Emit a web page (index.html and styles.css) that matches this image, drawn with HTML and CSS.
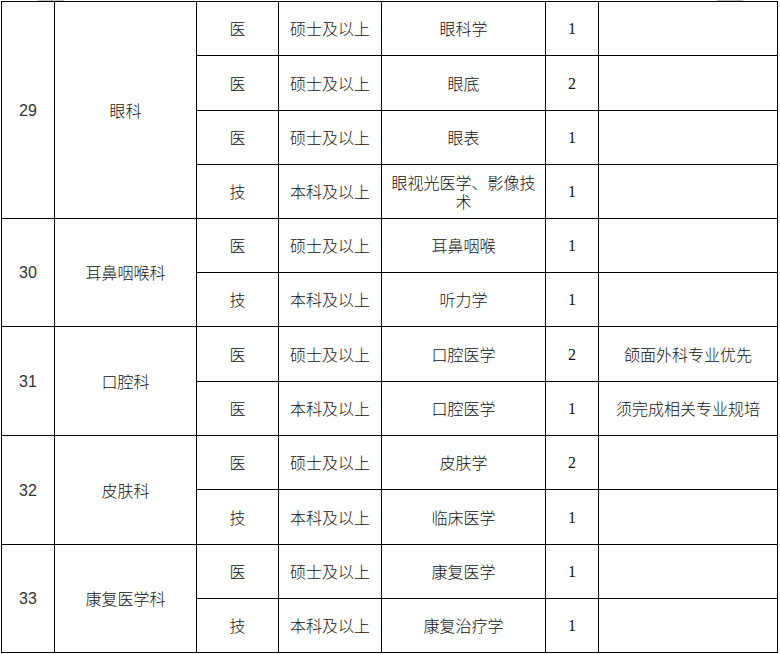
FILE: index.html
```html
<!DOCTYPE html>
<html lang="zh">
<head>
<meta charset="utf-8">
<title>招聘岗位表</title>
<link rel="stylesheet" href="styles.css">
</head>
<body>
<div class="topstrip"><span class="mark mark-a"></span><span class="mark mark-b"></span></div>
<table class="grid">
  <colgroup>
    <col class="c1"><col class="c2"><col class="c3"><col class="c4"><col class="c5"><col class="c6"><col class="c7">
  </colgroup>
  <tbody>
    <tr class="r54">
      <td class="num" rowspan="4">29</td>
      <td rowspan="4">眼科</td>
      <td>医</td><td>硕士及以上</td><td>眼科学</td><td class="cnt">1</td><td></td>
    </tr>
    <tr class="r55"><td>医</td><td>硕士及以上</td><td>眼底</td><td class="cnt">2</td><td></td></tr>
    <tr class="r54"><td>医</td><td>硕士及以上</td><td>眼表</td><td class="cnt">1</td><td></td></tr>
    <tr class="r54"><td>技</td><td>本科及以上</td><td class="wrap">眼视光医学、影像技术</td><td class="cnt">1</td><td></td></tr>
    <tr class="r54">
      <td class="num" rowspan="2">30</td>
      <td rowspan="2">耳鼻咽喉科</td>
      <td>医</td><td>硕士及以上</td><td>耳鼻咽喉</td><td class="cnt">1</td><td></td>
    </tr>
    <tr class="r54"><td>技</td><td>本科及以上</td><td>听力学</td><td class="cnt">1</td><td></td></tr>
    <tr class="r55">
      <td class="num" rowspan="2">31</td>
      <td rowspan="2">口腔科</td>
      <td>医</td><td>硕士及以上</td><td>口腔医学</td><td class="cnt">2</td><td>颌面外科专业优先</td>
    </tr>
    <tr class="r54"><td>医</td><td>本科及以上</td><td>口腔医学</td><td class="cnt">1</td><td>须完成相关专业规培</td></tr>
    <tr class="r54">
      <td class="num" rowspan="2">32</td>
      <td rowspan="2">皮肤科</td>
      <td>医</td><td>硕士及以上</td><td>皮肤学</td><td class="cnt">2</td><td></td>
    </tr>
    <tr class="r55"><td>技</td><td>本科及以上</td><td>临床医学</td><td class="cnt">1</td><td></td></tr>
    <tr class="r54">
      <td class="num" rowspan="2">33</td>
      <td rowspan="2">康复医学科</td>
      <td>医</td><td>硕士及以上</td><td>康复医学</td><td class="cnt">1</td><td></td>
    </tr>
    <tr class="r54"><td>技</td><td>本科及以上</td><td>康复治疗学</td><td class="cnt">1</td><td></td></tr>
  </tbody>
</table>
</body>
</html>
```
FILE: styles.css
```css
html, body {
  margin: 0;
  padding: 0;
  background: #ffffff;
}
body {
  font-family: "Noto Sans CJK SC", "Noto Sans", sans-serif;
  font-size: 16px;
  font-weight: 300;
  color: #111;
}
.topstrip {
  height: 1px;
  display: flex;
}
.mark {
  display: block;
  height: 1px;
  background: #c0c0c0;
}
.mark-a {
  width: 26px;
  margin-left: 38px;
}
.mark-b {
  width: 26px;
  margin-left: 653px;
}
.grid {
  border-collapse: collapse;
  table-layout: fixed;
  width: 777px;
  margin-left: 1px;
}
.grid td {
  border: 1px solid #000;
  padding: 0 9px;
  text-align: center;
  vertical-align: middle;
  line-height: 19px;
  overflow: hidden;
}
.c1 { width: 53px; }
.c2 { width: 142px; }
.c3 { width: 82px; }
.c4 { width: 103px; }
.c5 { width: 164px; }
.c6 { width: 53px; }
.c7 { width: 179px; }
.r54 { height: 54px; }
.r55 { height: 55px; }
.grid td.num {
  font-family: "Liberation Sans", Arial, sans-serif;
  font-size: 16px;
  font-weight: 400;
  color: #333;
}
.grid td.cnt {
  font-family: "Liberation Serif", "Times New Roman", serif;
  font-size: 16px;
  font-weight: 400;
}
```
